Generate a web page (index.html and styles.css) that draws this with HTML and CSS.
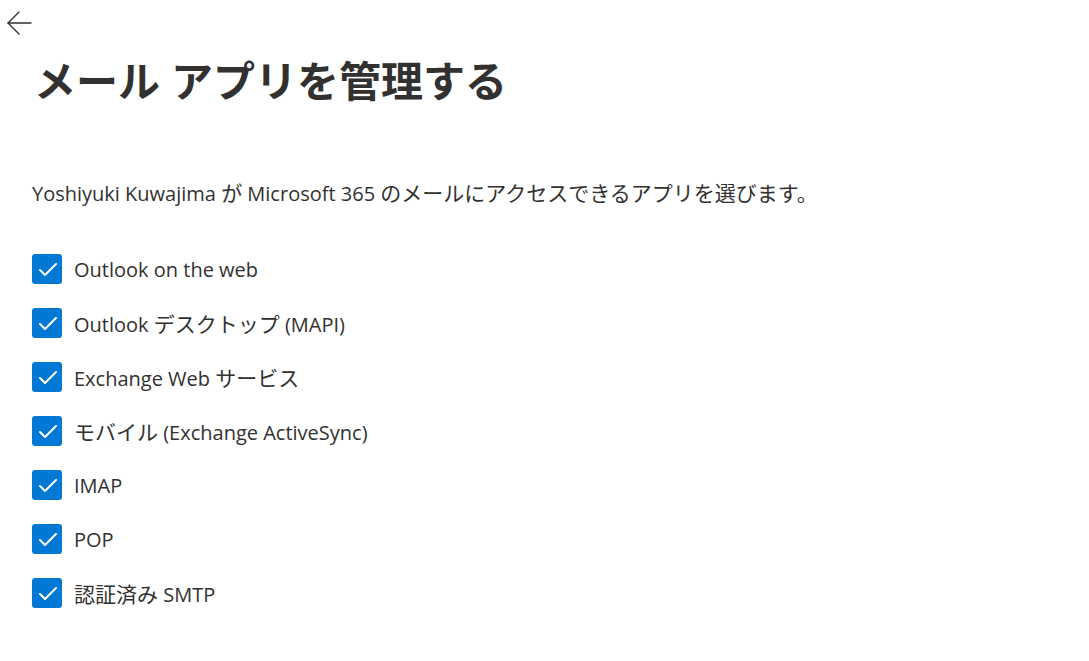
FILE: index.html
```html
<!DOCTYPE html>
<html lang="ja">
<head>
    <meta charset="UTF-8">
    <meta name="viewport" content="width=device-width, initial-scale=1.0">
    <title>メール アプリを管理する</title>
    <link rel="stylesheet" href="styles.css">
</head>
<body>
    <button class="volver" aria-label="戻る">
        <svg width="26" height="26" viewBox="0 0 26 26" fill="none" stroke="#323130" stroke-width="1.4" stroke-linecap="round" stroke-linejoin="round">
            <path d="M24 12H1"/>
            <path d="M12 1L1 12l11 11"/>
        </svg>
    </button>

    <main class="panel">
        <h1>メール アプリを管理する</h1>
        <p class="descripcion">Yoshiyuki Kuwajima <span class="ja">が</span> Microsoft 365 <span class="ja">のメールにアクセスできるアプリを選びます。</span></p>

        <ul class="lista-apps">
            <li><span class="check"><svg viewBox="0 0 30 30"><path d="M8 16l5 5 11-11"/></svg></span>Outlook on the web</li>
            <li><span class="check"><svg viewBox="0 0 30 30"><path d="M8 16l5 5 11-11"/></svg></span><span>Outlook <span class="ja">デスクトップ</span> (MAPI)</span></li>
            <li><span class="check"><svg viewBox="0 0 30 30"><path d="M8 16l5 5 11-11"/></svg></span><span>Exchange Web <span class="ja">サービス</span></span></li>
            <li><span class="check"><svg viewBox="0 0 30 30"><path d="M8 16l5 5 11-11"/></svg></span><span><span class="ja">モバイル</span> (Exchange ActiveSync)</span></li>
            <li><span class="check"><svg viewBox="0 0 30 30"><path d="M8 16l5 5 11-11"/></svg></span>IMAP</li>
            <li><span class="check"><svg viewBox="0 0 30 30"><path d="M8 16l5 5 11-11"/></svg></span>POP</li>
            <li><span class="check"><svg viewBox="0 0 30 30"><path d="M8 16l5 5 11-11"/></svg></span><span><span class="ja">認証済み</span> SMTP</span></li>
        </ul>
    </main>
</body>
</html>
```

FILE: styles.css
```css
body {
    font-family: "Open Sans", "Noto Sans CJK JP", sans-serif;
    margin: 0;
    padding: 0;
    background-color: #fff;
    color: #323130;
}
.volver {
    display: block;
    background: none;
    border: none;
    padding: 0;
    margin: 11px 0 0 7px;
    width: 26px;
    height: 26px;
    cursor: pointer;
}
.volver svg {
    display: block;
}
.panel {
    padding: 0 32px;
}
h1 {
    font-size: 42px;
    font-weight: 700;
    line-height: 56px;
    margin: 16px 0 0 2px;
}
/* el texto japonés se ve un poco más grande que el latino */
.ja {
    font-size: 21px;
}
.descripcion {
    font-size: 20px;
    line-height: 28px;
    margin: 70px 0 0;
}
.lista-apps {
    list-style: none;
    margin: 46px 0 0;
    padding: 0;
    display: flex;
    flex-direction: column;
    gap: 24px;
}
.lista-apps li {
    display: flex;
    align-items: center;
    gap: 12px;
    font-size: 20px;
    height: 30px;
}
.check {
    width: 30px;
    height: 30px;
    border-radius: 3px;
    background: #0078d4;
    flex-shrink: 0;
}
.check svg {
    display: block;
    width: 30px;
    height: 30px;
    fill: none;
    stroke: #fff;
    stroke-width: 2;
    stroke-linecap: round;
    stroke-linejoin: round;
}
```
